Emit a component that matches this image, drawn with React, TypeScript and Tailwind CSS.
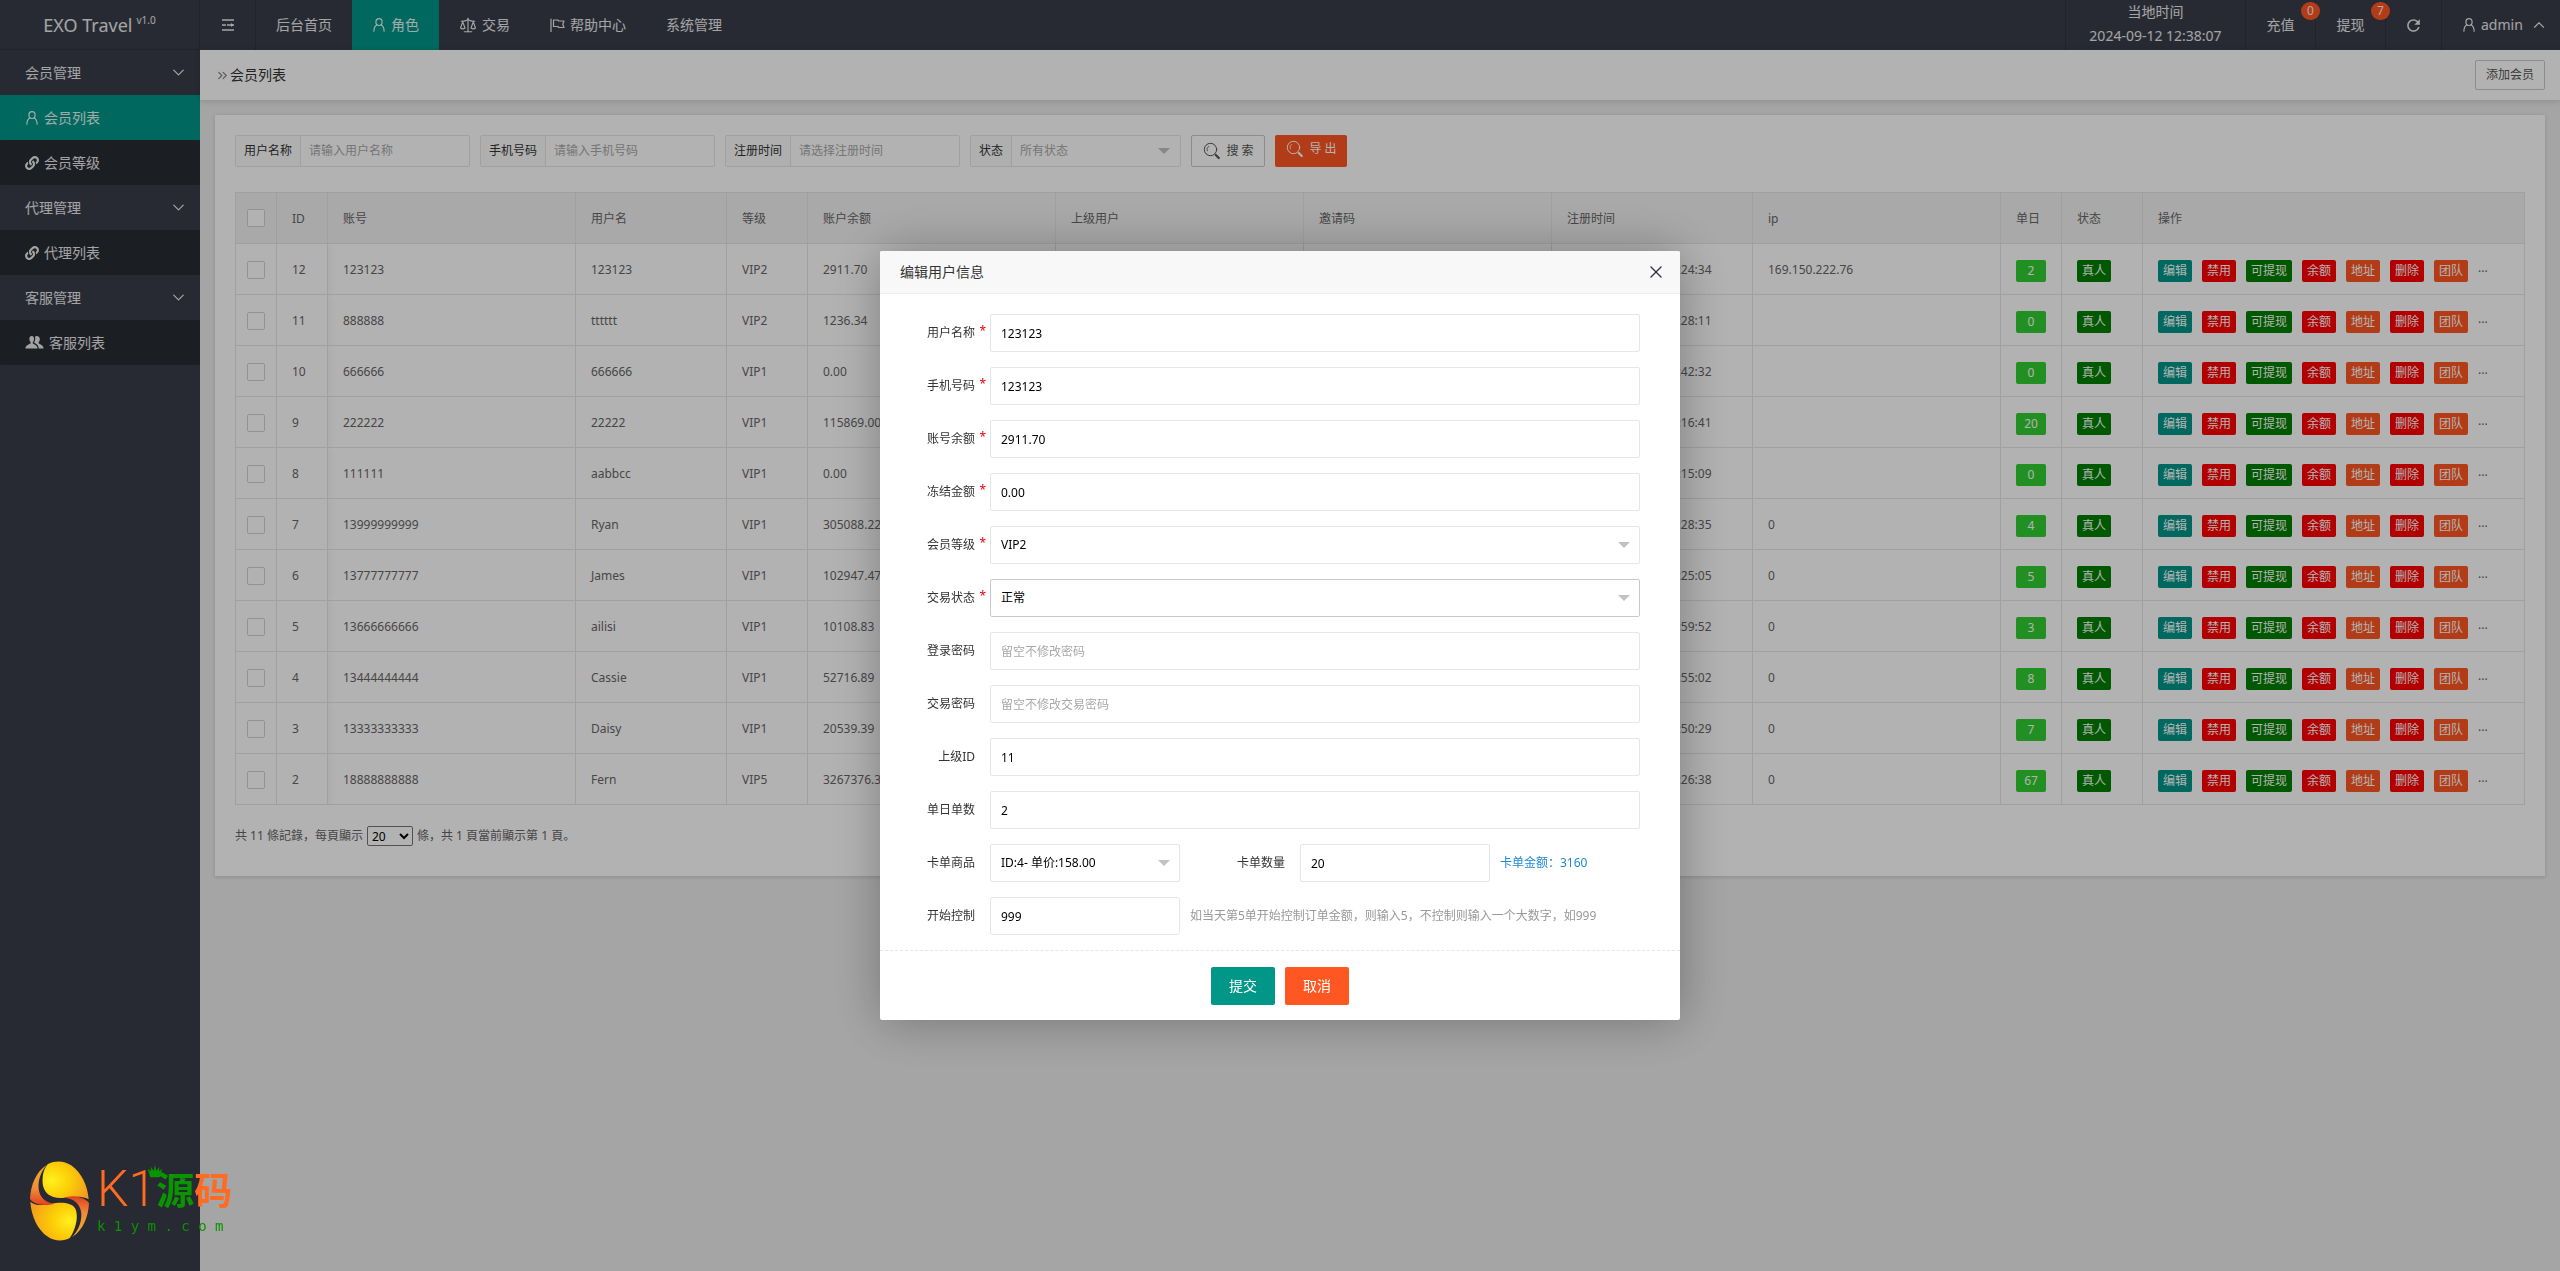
import { ReactNode, useState } from "react";
import { ChevronDown, ChevronUp, ChevronsRight, Scale, X } from "lucide-react";
import { FaLink } from "react-icons/fa";
import { MdRefresh } from "react-icons/md";

type Member = {
  id: number;
  account: string;
  name: string;
  level: string;
  balance: string;
  date: string;
  time: string;
  ip: string;
  orders: number;
};

const members: Member[] = [
  { id: 12, account: "123123", name: "123123", level: "VIP2", balance: "2911.70", date: "2024年09月11日", time: "16:24:34", ip: "169.150.222.76", orders: 2 },
  { id: 11, account: "888888", name: "tttttt", level: "VIP2", balance: "1236.34", date: "2024年09月10日", time: "13:28:11", ip: "", orders: 0 },
  { id: 10, account: "666666", name: "666666", level: "VIP1", balance: "0.00", date: "2024年09月10日", time: "11:42:32", ip: "", orders: 0 },
  { id: 9, account: "222222", name: "22222", level: "VIP1", balance: "115869.00", date: "2024年09月09日", time: "17:16:41", ip: "", orders: 20 },
  { id: 8, account: "111111", name: "aabbcc", level: "VIP1", balance: "0.00", date: "2024年09月09日", time: "15:15:09", ip: "", orders: 0 },
  { id: 7, account: "13999999999", name: "Ryan", level: "VIP1", balance: "305088.22", date: "2024年09月08日", time: "18:28:35", ip: "0", orders: 4 },
  { id: 6, account: "13777777777", name: "James", level: "VIP1", balance: "102947.47", date: "2024年09月08日", time: "18:25:05", ip: "0", orders: 5 },
  { id: 5, account: "13666666666", name: "ailisi", level: "VIP1", balance: "10108.83", date: "2024年09月08日", time: "17:59:52", ip: "0", orders: 3 },
  { id: 4, account: "13444444444", name: "Cassie", level: "VIP1", balance: "52716.89", date: "2024年09月08日", time: "17:55:02", ip: "0", orders: 8 },
  { id: 3, account: "13333333333", name: "Daisy", level: "VIP1", balance: "20539.39", date: "2024年09月08日", time: "17:50:29", ip: "0", orders: 7 },
  { id: 2, account: "18888888888", name: "Fern", level: "VIP5", balance: "3267376.35", date: "2024年09月08日", time: "17:26:38", ip: "0", orders: 67 },
];

const actions = [
  { label: "编辑", color: "bg-[#009688]" },
  { label: "禁用", color: "bg-[#ff0000]" },
  { label: "可提现", color: "bg-[#008000]" },
  { label: "余额", color: "bg-[#ff0000]" },
  { label: "地址", color: "bg-[#ff5722]" },
  { label: "删除", color: "bg-[#ff0000]" },
  { label: "团队", color: "bg-[#ff5722]" },
];

/* ---------- icons ---------- */

function UserIcon() {
  return (
    <svg width="14" height="14" viewBox="0 0 14 14" fill="none" stroke="currentColor" strokeWidth="1.2" strokeLinecap="round">
      <ellipse cx="7" cy="4.1" rx="3.1" ry="3.4" />
      <path d="M4.9 6.8C3 8 1.9 10 1.9 13.2M9.1 6.8c1.9 1.2 3 3.2 3 6.4" />
    </svg>
  );
}

function UsersIcon() {
  return (
    <svg width="19" height="15" viewBox="0 0 19 15" fill="currentColor">
      <path d="M6.8 1C5 1 4.2 2.4 4.4 4.2c.1 1.3.5 2.2 1.2 2.900v1.400C3.600 9.500.6 10.200.4 13.600h12.200c-.2-3.400-3.100-4.100-4.800-5.100V7.100c.7-.7 1.100-1.600 1.200-2.900C9.200 2.400 8.500 1 6.800 1z" />
      <path d="M11.800 1c-.8 0-1.400.3-1.800.8.5 1.700.3 3.700-.8 5.400v.6c1.700.9 4.300 2 4.600 5.800h4.800c-.2-3.400-3-4.100-4.900-5.100V7.100c.7-.7 1-1.600 1.100-2.900C15 2.400 13.500 1 11.800 1z" />
    </svg>
  );
}

function FlagIcon() {
  return (
    <svg width="15" height="14" viewBox="0 0 15 14" fill="none" stroke="currentColor" strokeWidth="1.2" strokeLinejoin="round" strokeLinecap="round">
      <path d="M1 1v12.500M3.500 2h4.200l1 1h5.300l-1.200 3.200L14 9.500H8.800l-1-1H3.500z" />
    </svg>
  );
}

function ShrinkIcon() {
  return (
    <svg width="14" height="14" viewBox="0 0 14 14" fill="none" stroke="currentColor" strokeWidth="1.5">
      <path d="M1 2h12M6 7h7M1 12h12M1 7h4" />
      <path d="M10 5l2.500 2L10 9z" fill="currentColor" stroke="none" />
    </svg>
  );
}

function SearchIcon() {
  return (
    <svg width="18" height="18" viewBox="0 0 18 18" fill="none" stroke="currentColor" strokeLinecap="round">
      <circle cx="7.5" cy="7.5" r="6.2" strokeWidth="1" />
      <path d="M4.200 8.800a3.600 3.600 0 0 1 1.500-4.500" strokeWidth="0.800" />
      <path d="M12.800 13l3 3" strokeWidth="2.200" />
    </svg>
  );
}

function SelectArrow() {
  return (
    <svg width="12" height="6" viewBox="0 0 12 6" className="pointer-events-none absolute top-1/2 right-2.5 -translate-y-1/2 fill-[#c2c2c2]">
      <path d="M0 0h12L6 6z" />
    </svg>
  );
}

/* ---------- header ---------- */

function NavLink({ icon, label, active }: { icon?: ReactNode; label: string; active?: boolean }) {
  return (
    <a href="#" className={`flex h-full items-center gap-[5px] px-5 ${active ? "bg-[#009688]" : ""}`}>
      {icon}
      {label}
    </a>
  );
}

function Counter({ label, count }: { label: string; count: number }) {
  return (
    <a href="#" className="relative flex h-full w-[70px] items-center justify-center border-r border-[#30333d]">
      {label}
      <span className="absolute top-0.5 right-[-5px] h-[18px] min-w-[19px] rounded-full bg-[#ff5722] text-center text-xs leading-[18px]">{count}</span>
    </a>
  );
}

function Header() {
  return (
    <header className="flex h-[50px] bg-[#393d49] text-sm text-white/90">
      <a href="#" className="flex w-[200px] items-center justify-center gap-1 border-r border-b border-[#30333d] text-lg">
        EXO Travel <sup className="text-[10px]">v1.0</sup>
      </a>
      <nav className="flex items-center">
        <button type="button" aria-label="收起菜单" className="flex h-full w-14 items-center justify-center border-r border-[#30333d]">
          <ShrinkIcon />
        </button>
        <NavLink label="后台首页" />
        <NavLink label="角色" icon={<UserIcon />} active />
        <NavLink label="交易" icon={<Scale size={18} strokeWidth={1.5} />} />
        <NavLink label="帮助中心" icon={<FlagIcon />} />
        <NavLink label="系统管理" />
      </nav>
      <div className="ml-auto flex items-center">
        <div className="h-full w-[181px] border-x border-[#30333d] text-center leading-6">
          <p>当地时间</p>
          <p>2024-09-12 12:38:07</p>
        </div>
        <Counter label="充值" count={0} />
        <Counter label="提现" count={7} />
        <button type="button" aria-label="刷新" className="flex h-full w-14 items-center justify-center border-r border-[#30333d]">
          <MdRefresh size={19} />
        </button>
        <a href="#" className="flex h-full w-[118px] items-center gap-[5px] pl-5">
          <UserIcon />
          admin
          <ChevronUp size={18} strokeWidth={1.5} className="ml-0.5" />
        </a>
      </div>
    </header>
  );
}

/* ---------- sidebar ---------- */

const menu = [
  { title: "会员管理", items: [{ label: "会员列表", icon: "user" }, { label: "会员等级", icon: "link" }] },
  { title: "代理管理", items: [{ label: "代理列表", icon: "link" }] },
  { title: "客服管理", items: [{ label: "客服列表", icon: "users" }] },
];

function Sidebar() {
  return (
    <aside className="w-[200px] shrink-0 bg-[#393d49] text-sm text-white/90">
      {menu.map((group) => (
        <div key={group.title}>
          <button type="button" className="flex h-[45px] w-full items-center justify-between pr-3 pl-[25px]">
            {group.title}
            <ChevronDown size={19} strokeWidth={1.5} />
          </button>
          {group.items.map((item) => (
            <a
              key={item.label}
              href="#"
              className={`flex h-[45px] items-center gap-[5px] pl-[25px] ${item.icon === "user" ? "bg-[#009688]" : "rounded-xs bg-[#282b33]"}`}
            >
              {item.icon === "user" && <UserIcon />}
              {item.icon === "link" && <FaLink size={14} />}
              {item.icon === "users" && <UsersIcon />}
              {item.label}
            </a>
          ))}
        </div>
      ))}
    </aside>
  );
}

/* ---------- list page ---------- */

const filters = [
  { id: "f-name", label: "用户名称", placeholder: "请输入用户名称" },
  { id: "f-phone", label: "手机号码", placeholder: "请输入手机号码" },
  { id: "f-time", label: "注册时间", placeholder: "请选择注册时间" },
];

function Filters() {
  return (
    <form className="flex items-center gap-2.5">
      {filters.map((f) => (
        <div key={f.id} className="flex h-8 rounded-xs border border-[#e6e6e6]">
          <label htmlFor={f.id} className="flex items-center bg-[#fbfbfb] px-2 text-[#333]">
            {f.label}
          </label>
          <input id={f.id} placeholder={f.placeholder} className="w-[169px] border-l border-[#e6e6e6] px-2 outline-none placeholder:text-[#a9a9a9]" />
        </div>
      ))}
      <div className="flex h-8 rounded-xs border border-[#e6e6e6]">
        <label htmlFor="f-status" className="flex items-center bg-[#fbfbfb] px-2 text-[#333]">
          状态
        </label>
        <div className="relative w-[169px] border-l border-[#e6e6e6]">
          <select id="f-status" className="h-full w-full appearance-none px-2 text-[#a9a9a9] outline-none">
            <option>所有状态</option>
          </select>
          <SelectArrow />
        </div>
      </div>
      <button type="button" className="flex h-8 w-[74px] items-center justify-center gap-1.5 rounded-xs border border-[#c9c9c9] text-[#555]">
        <SearchIcon />搜 索
      </button>
      <button type="button" className="flex h-8 w-[72px] items-center justify-center gap-1.5 rounded-xs bg-[#ff5722] pb-1 text-white">
        <SearchIcon />导 出
      </button>
    </form>
  );
}

function Checkbox({ label }: { label: string }) {
  return <input type="checkbox" aria-label={label} className="mx-auto block size-[18px] appearance-none rounded-xs border border-[#d2d2d2] bg-white" />;
}

function Cell({ children }: { children?: ReactNode }) {
  return <td className="overflow-hidden border-r border-b border-[#e6e6e6] px-[15px] pt-0.5 whitespace-nowrap">{children}</td>;
}

const columns = ["ID", "账号", "用户名", "等级", "账户余额", "上级用户", "邀请码", "注册时间", "ip", "单日", "状态", "操作"];

function MemberTable() {
  return (
    <table className="mt-[25px] w-full table-fixed border-separate border-spacing-0 border-t border-l border-[#e6e6e6] text-left text-[#666]">
      <colgroup>
        <col className="w-[41px]" />
        <col className="w-[51px]" />
        <col />
        <col className="w-[151px]" />
        <col className="w-[81px]" />
        <col />
        <col />
        <col />
        <col className="w-[201px]" />
        <col />
        <col className="w-[61px]" />
        <col className="w-[81px]" />
        <col className="w-[382px]" />
      </colgroup>
      <thead>
        <tr className="h-[51px] bg-[#f2f2f2]">
          <th className="border-r border-b border-[#e6e6e6]">
            <Checkbox label="全选" />
          </th>
          {columns.map((c) => (
            <th key={c} className="border-r border-b border-[#e6e6e6] px-[15px] pt-0.5 font-normal whitespace-nowrap">
              {c}
            </th>
          ))}
        </tr>
      </thead>
      <tbody>
        {members.map((m) => (
          <tr key={m.id} className="h-[51px]">
            <td className="border-r border-b border-[#e6e6e6] pt-0.5">
              <Checkbox label={m.account} />
            </td>
            <td className="border-r border-b border-[#e6e6e6] px-[15px] pt-0.5 shadow-[1px_0_8px_rgba(0,0,0,0.06)] [clip-path:inset(0_-12px_0_0)]">{m.id}</td>
            <Cell>{m.account}</Cell>
            <Cell>{m.name}</Cell>
            <Cell>{m.level}</Cell>
            <Cell>{m.balance}</Cell>
            <Cell />
            <Cell />
            <Cell>
              <div className="flex gap-1.5">
                <span>{m.date}</span>
                <span>{m.time}</span>
              </div>
            </Cell>
            <Cell>{m.ip}</Cell>
            <Cell>
              <button type="button" className="mt-0.5 block h-[22px] w-[30px] rounded-xs bg-[#32cd32] text-center text-white">
                {m.orders}
              </button>
            </Cell>
            <Cell>
              <button type="button" className="mt-0.5 block h-[22px] rounded-xs bg-[#008000] px-[5px] text-white">
                真人
              </button>
            </Cell>
            <Cell>
              <div className="mt-0.5 flex gap-2.5">
                {actions.map((a) => (
                  <button key={a.label} type="button" className={`h-[22px] rounded-xs px-[5px] text-white ${a.color}`}>
                    {a.label}
                  </button>
                ))}
                <span>...</span>
              </div>
            </Cell>
          </tr>
        ))}
      </tbody>
    </table>
  );
}

function MemberPage() {
  return (
    <main className="min-w-0 flex-1 bg-[#ececec]">
      <div className="flex h-[50px] items-center justify-between bg-white px-[15px] shadow-[0_1px_6px_rgba(0,0,0,0.15)]">
        <h1 className="flex items-center text-sm text-[#333]">
          <ChevronsRight size={15} strokeWidth={2} className="text-[#888]" />
          会员列表
        </h1>
        <button type="button" className="h-[30px] w-[70px] rounded-xs border border-[#c9c9c9] text-[#555]">
          添加会员
        </button>
      </div>
      <section className="m-[15px] bg-white p-5 pb-[30px] shadow-[0_1px_4px_rgba(0,0,0,0.15)]">
        <Filters />
        <MemberTable />
        <div className="mt-[21px] flex items-center gap-1 text-[#666]">
          <span>共 11 條記錄，每頁顯示</span>
          <select aria-label="每頁條數" className="h-5 w-[46px] rounded-xs border border-[#767676] text-black">
            <option>20</option>
          </select>
          <span>條，共 1 頁當前顯示第 1 頁。</span>
        </div>
      </section>
    </main>
  );
}

/* ---------- edit dialog ---------- */

const inputClass = "h-[38px] w-full rounded-xs border border-[#e6e6e6] bg-white px-2.5 text-black outline-none placeholder:text-[#a9a9a9]";

function Field({ id, label, required, children }: { id: string; label: string; required?: boolean; children: ReactNode }) {
  return (
    <div className="flex items-center">
      <label htmlFor={id} className="relative w-[110px] pr-[15px] text-right text-[#333]">
        {label}
        {required && <span className="absolute -top-0.5 right-1 text-red-600">*</span>}
      </label>
      {children}
    </div>
  );
}

function TextField({ id, label, required, value, placeholder }: { id: string; label: string; required?: boolean; value?: string; placeholder?: string }) {
  return (
    <Field id={id} label={label} required={required}>
      <div className="flex-1">
        <input id={id} defaultValue={value} placeholder={placeholder} className={inputClass} />
      </div>
    </Field>
  );
}

function EditDialog({ onClose }: { onClose: () => void }) {
  return (
    <div className="fixed inset-0 flex items-center justify-center bg-black/30">
      <div role="dialog" aria-label="编辑用户信息" className="w-[800px] rounded-xs bg-white shadow-[1px_1px_50px_rgba(0,0,0,0.3)]">
        <div className="flex h-[43px] items-center justify-between rounded-t-xs border-b border-[#eee] bg-[#f8f8f8] pr-3.5 pl-5 text-sm text-[#333]">
          编辑用户信息
          <button type="button" aria-label="关闭" onClick={onClose}>
            <X size={20} strokeWidth={1.5} className="text-[#2d3038]" />
          </button>
        </div>
        <form>
          <div className="flex flex-col gap-[15px] py-5 pr-10 pb-[15px]">
            <TextField id="e-name" label="用户名称" required value="123123" />
            <TextField id="e-phone" label="手机号码" required value="123123" />
            <TextField id="e-balance" label="账号余额" required value="2911.70" />
            <TextField id="e-frozen" label="冻结金额" required value="0.00" />
            <Field id="e-level" label="会员等级" required>
              <div className="relative flex-1">
                <select id="e-level" className={`${inputClass} appearance-none`}>
                  <option>VIP2</option>
                </select>
                <SelectArrow />
              </div>
            </Field>
            <Field id="e-status" label="交易状态" required>
              <div className="relative flex-1">
                <select id="e-status" className="h-[38px] w-full appearance-none rounded-xs border border-[#c9c9c9] bg-white px-2.5 text-black outline-none">
                  <option>正常</option>
                </select>
                <SelectArrow />
              </div>
            </Field>
            <TextField id="e-pwd" label="登录密码" placeholder="留空不修改密码" />
            <TextField id="e-pwd2" label="交易密码" placeholder="留空不修改交易密码" />
            <TextField id="e-parent" label="上级ID" value="11" />
            <TextField id="e-orders" label="单日单数" value="2" />
            <div className="flex items-center">
              <Field id="e-goods" label="卡单商品">
                <div className="relative w-[190px]">
                  <select id="e-goods" className={`${inputClass} appearance-none`}>
                    <option>ID:4- 单价:158.00</option>
                  </select>
                  <SelectArrow />
                </div>
              </Field>
              <div className="ml-2.5">
                <Field id="e-count" label="卡单数量">
                  <div className="w-[190px]">
                    <input id="e-count" defaultValue="20" className={inputClass} />
                  </div>
                </Field>
              </div>
              <span className="ml-2.5 text-[#1e88d2]">卡单金额：3160</span>
            </div>
            <div className="flex items-center">
              <Field id="e-start" label="开始控制">
                <div className="w-[190px]">
                  <input id="e-start" defaultValue="999" className={inputClass} />
                </div>
              </Field>
              <span className="ml-2.5 text-[#999]">如当天第5单开始控制订单金额，则输入5，不控制则输入一个大数字，如999</span>
            </div>
          </div>
          <div className="flex justify-center gap-2.5 border-t border-dashed border-[#e6e6e6] pt-4 pb-[15px] text-sm text-white">
            <button type="button" className="h-[38px] w-16 rounded-xs bg-[#009688]">
              提交
            </button>
            <button type="button" onClick={onClose} className="h-[38px] w-16 rounded-xs bg-[#ff5722]">
              取消
            </button>
          </div>
        </form>
      </div>
    </div>
  );
}

/* ---------- corner brand mark ---------- */

function BrandMark() {
  return (
    <div className="pointer-events-none fixed bottom-[30px] left-[30px] flex items-center gap-2">
      <svg width="59" height="80" viewBox="0 0 178 240">
        <defs>
          <radialGradient id="top" cx="0.2" cy="0.5" r="0.85">
            <stop offset="0" stopColor="#fff01e" />
            <stop offset="0.45" stopColor="#fcd106" />
            <stop offset="1" stopColor="#f39a1f" />
          </radialGradient>
          <radialGradient id="bottom" cx="0.85" cy="0.5" r="0.9">
            <stop offset="0" stopColor="#fff01e" />
            <stop offset="0.45" stopColor="#fccb06" />
            <stop offset="1" stopColor="#f39a1f" />
          </radialGradient>
          <linearGradient id="left" x1="0.5" y1="0" x2="0.5" y2="1">
            <stop offset="0" stopColor="#f7b020" />
            <stop offset="0.6" stopColor="#f08a3a" />
            <stop offset="1" stopColor="#e2401f" />
          </linearGradient>
          <linearGradient id="right" x1="0.5" y1="1" x2="0.5" y2="0">
            <stop offset="0" stopColor="#f7b020" />
            <stop offset="0.6" stopColor="#f08a3a" />
            <stop offset="1" stopColor="#e2401f" />
          </linearGradient>
        </defs>
        <path d="M54 8C76-3 104-2 124 12c32 22 50 62 53 103-12-9-47-10-72-5C70 116 40 100 38 65 37 40 42 22 54 8z" fill="url(#top)" />
        <path d="M120 232c-18 10-46 10-66-4C22 206 4 166 1 122c14 13 34 11 59 7 30-5 62-7 76 13 12 23 2 63-16 90z" fill="url(#bottom)" />
        <path d="M51 11C18 32 2 72 0 114c16 21 46 20 76 14C42 126 28 104 26 82c-2-26 8-52 25-71z" fill="url(#left)" />
        <path d="M127 229c33-21 49-61 51-103-18-22-53-22-76-16 33 2 52 22 53 50 0 30-12 52-28 69z" fill="url(#right)" />
      </svg>
      <div>
        <div className="relative flex h-[50px] items-center text-[38px] leading-none text-[#ff6b20]">
          <span className="font-['Liberation_Sans_Narrow',Roboto] text-[50px] font-light">K1</span>
          <svg width="16" height="15" viewBox="0 0 48 45" className="absolute top-0 left-[50px] fill-[#0a9400]">
            <path d="M24 2l4 18 9-12-1 14 10-8-8 26H10L2 14l10 8-1-14 9 12z" />
          </svg>
          <span className="font-bold">
            <span className="text-[#0a9400]">源</span>码
          </span>
        </div>
        <p className="font-['DejaVu_Sans_Mono'] text-sm leading-6 text-[#0a9400]">k 1 y m . c o m</p>
      </div>
    </div>
  );
}

export default function App() {
  const [editing, setEditing] = useState(true);

  return (
    <div className="flex min-h-screen flex-col font-['Noto_Sans','Noto_Sans_CJK_SC',sans-serif] text-xs">
      <Header />
      <div className="flex flex-1">
        <Sidebar />
        <MemberPage />
      </div>
      {editing && <EditDialog onClose={() => setEditing(false)} />}
      <BrandMark />
    </div>
  );
}
